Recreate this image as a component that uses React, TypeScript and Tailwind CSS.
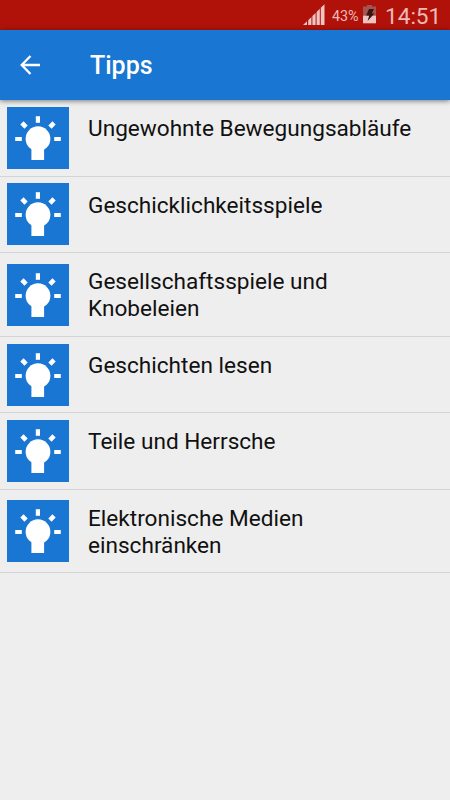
import React from "react";

interface Tip {
  title: string;
  rowClass: string;
  iconClass: string;
}

const tips: Tip[] = [
  { title: "Ungewohnte Bewegungsabläufe", rowClass: "h-[77px]", iconClass: "mt-[7px]" },
  { title: "Geschicklichkeitsspiele", rowClass: "h-[76px]", iconClass: "mt-[6px]" },
  { title: "Gesellschaftsspiele und Knobeleien", rowClass: "h-[84px]", iconClass: "mt-[10.5px]" },
  { title: "Geschichten lesen", rowClass: "h-[76px]", iconClass: "mt-[6.5px]" },
  { title: "Teile und Herrsche", rowClass: "h-[77px]", iconClass: "mt-[7px]" },
  { title: "Elektronische Medien einschränken", rowClass: "h-[83px]", iconClass: "mt-[10px]" },
];

const BulbIcon: React.FC = () => (
  <svg viewBox="0 0 62 62" className="h-[62px] w-[62px]" fill="#fff">
    <circle cx="31" cy="31.7" r="12.4" />
    <path d="M24.4 38h12.7v15H24.4z" />
    <path d="M28.8 9.2h4.2v6.6h-4.2z" />
    <path d="M8.2 29.9h6.6v4.2H8.2zM47.2 29.9h6.6v4.2h-6.6z" />
    <rect x="14.1" y="15.7" width="5.8" height="4.6" transform="rotate(45 17 18)" />
    <rect x="42.1" y="15.7" width="5.8" height="4.6" transform="rotate(-45 45 18)" />
  </svg>
);

const StatusBar: React.FC = () => (
  <div className="flex h-[30px] items-start bg-[#b0120a] text-[#efb9b5]">
    <svg viewBox="0 0 22 22" className="ml-[303px] mt-1 h-[22px] w-[22px]" fill="#efc5c2">
      <path d="M0 21L4 17.2V21zM5.2 16.2l3.2-3.1V21H5.2zM9.4 12.1l3.2-3.1v12H9.4zM13.6 8l3.2-3.2V21h-3.2zM17.8 3.8L21.5 .3V21h-3.7z" />
    </svg>
    <span className="ml-[7px] mt-[7px] w-[29px] whitespace-nowrap text-[14.3px] leading-[18px]">43%</span>
    <svg viewBox="0 0 13 19" className="ml-[2px] mt-[5px] h-[19px] w-[13px]">
      <path d="M4 0h5v1.5h4V11H0V1.5h4z" fill="#a35550" />
      <path d="M0 10.7h13V18.3H0z" fill="#efc5c2" />
      <path d="M6 4h5L8.8 8.5h2.6L4.6 16l1.6-5.4H3.2z" fill="#3a1210" />
    </svg>
    <span className="ml-[9px] mt-[3px] whitespace-nowrap text-[22.6px] leading-[27px]">14:51</span>
  </div>
);

const AppBar: React.FC = () => (
  <header className="relative flex h-[70px] items-center bg-[#1976d2] text-white shadow-[0_1px_5px_rgba(0,0,0,0.5)]">
    <svg viewBox="0 0 20 20" className="ml-5 h-5 w-5" fill="none" stroke="#fff" strokeWidth="2.3">
      <path d="M20 10H2M10.5 1L1.7 10l8.8 9" />
    </svg>
    <h1 className="ml-[50px] mt-[2px] text-[25px] font-medium leading-[30px]">Tipps</h1>
  </header>
);

export default function App() {
  return (
    <div className="h-[800px] w-[450px] overflow-hidden bg-[#eeeeee] font-[Roboto,sans-serif]">
      <StatusBar />
      <AppBar />
      <ul>
        {tips.map((tip) => (
          <li key={tip.title} className={`flex items-start border-b border-[#d4d4d4] pl-[7px] ${tip.rowClass}`}>
            <div className={`h-[62px] w-[62px] shrink-0 bg-[#1976d2] ${tip.iconClass}`}>
              <BulbIcon />
            </div>
            <p className="ml-[19px] mt-4 w-[330px] text-[22.6px] leading-[26.5px] text-[#111111]">
              {tip.title}
            </p>
          </li>
        ))}
      </ul>
    </div>
  );
}
